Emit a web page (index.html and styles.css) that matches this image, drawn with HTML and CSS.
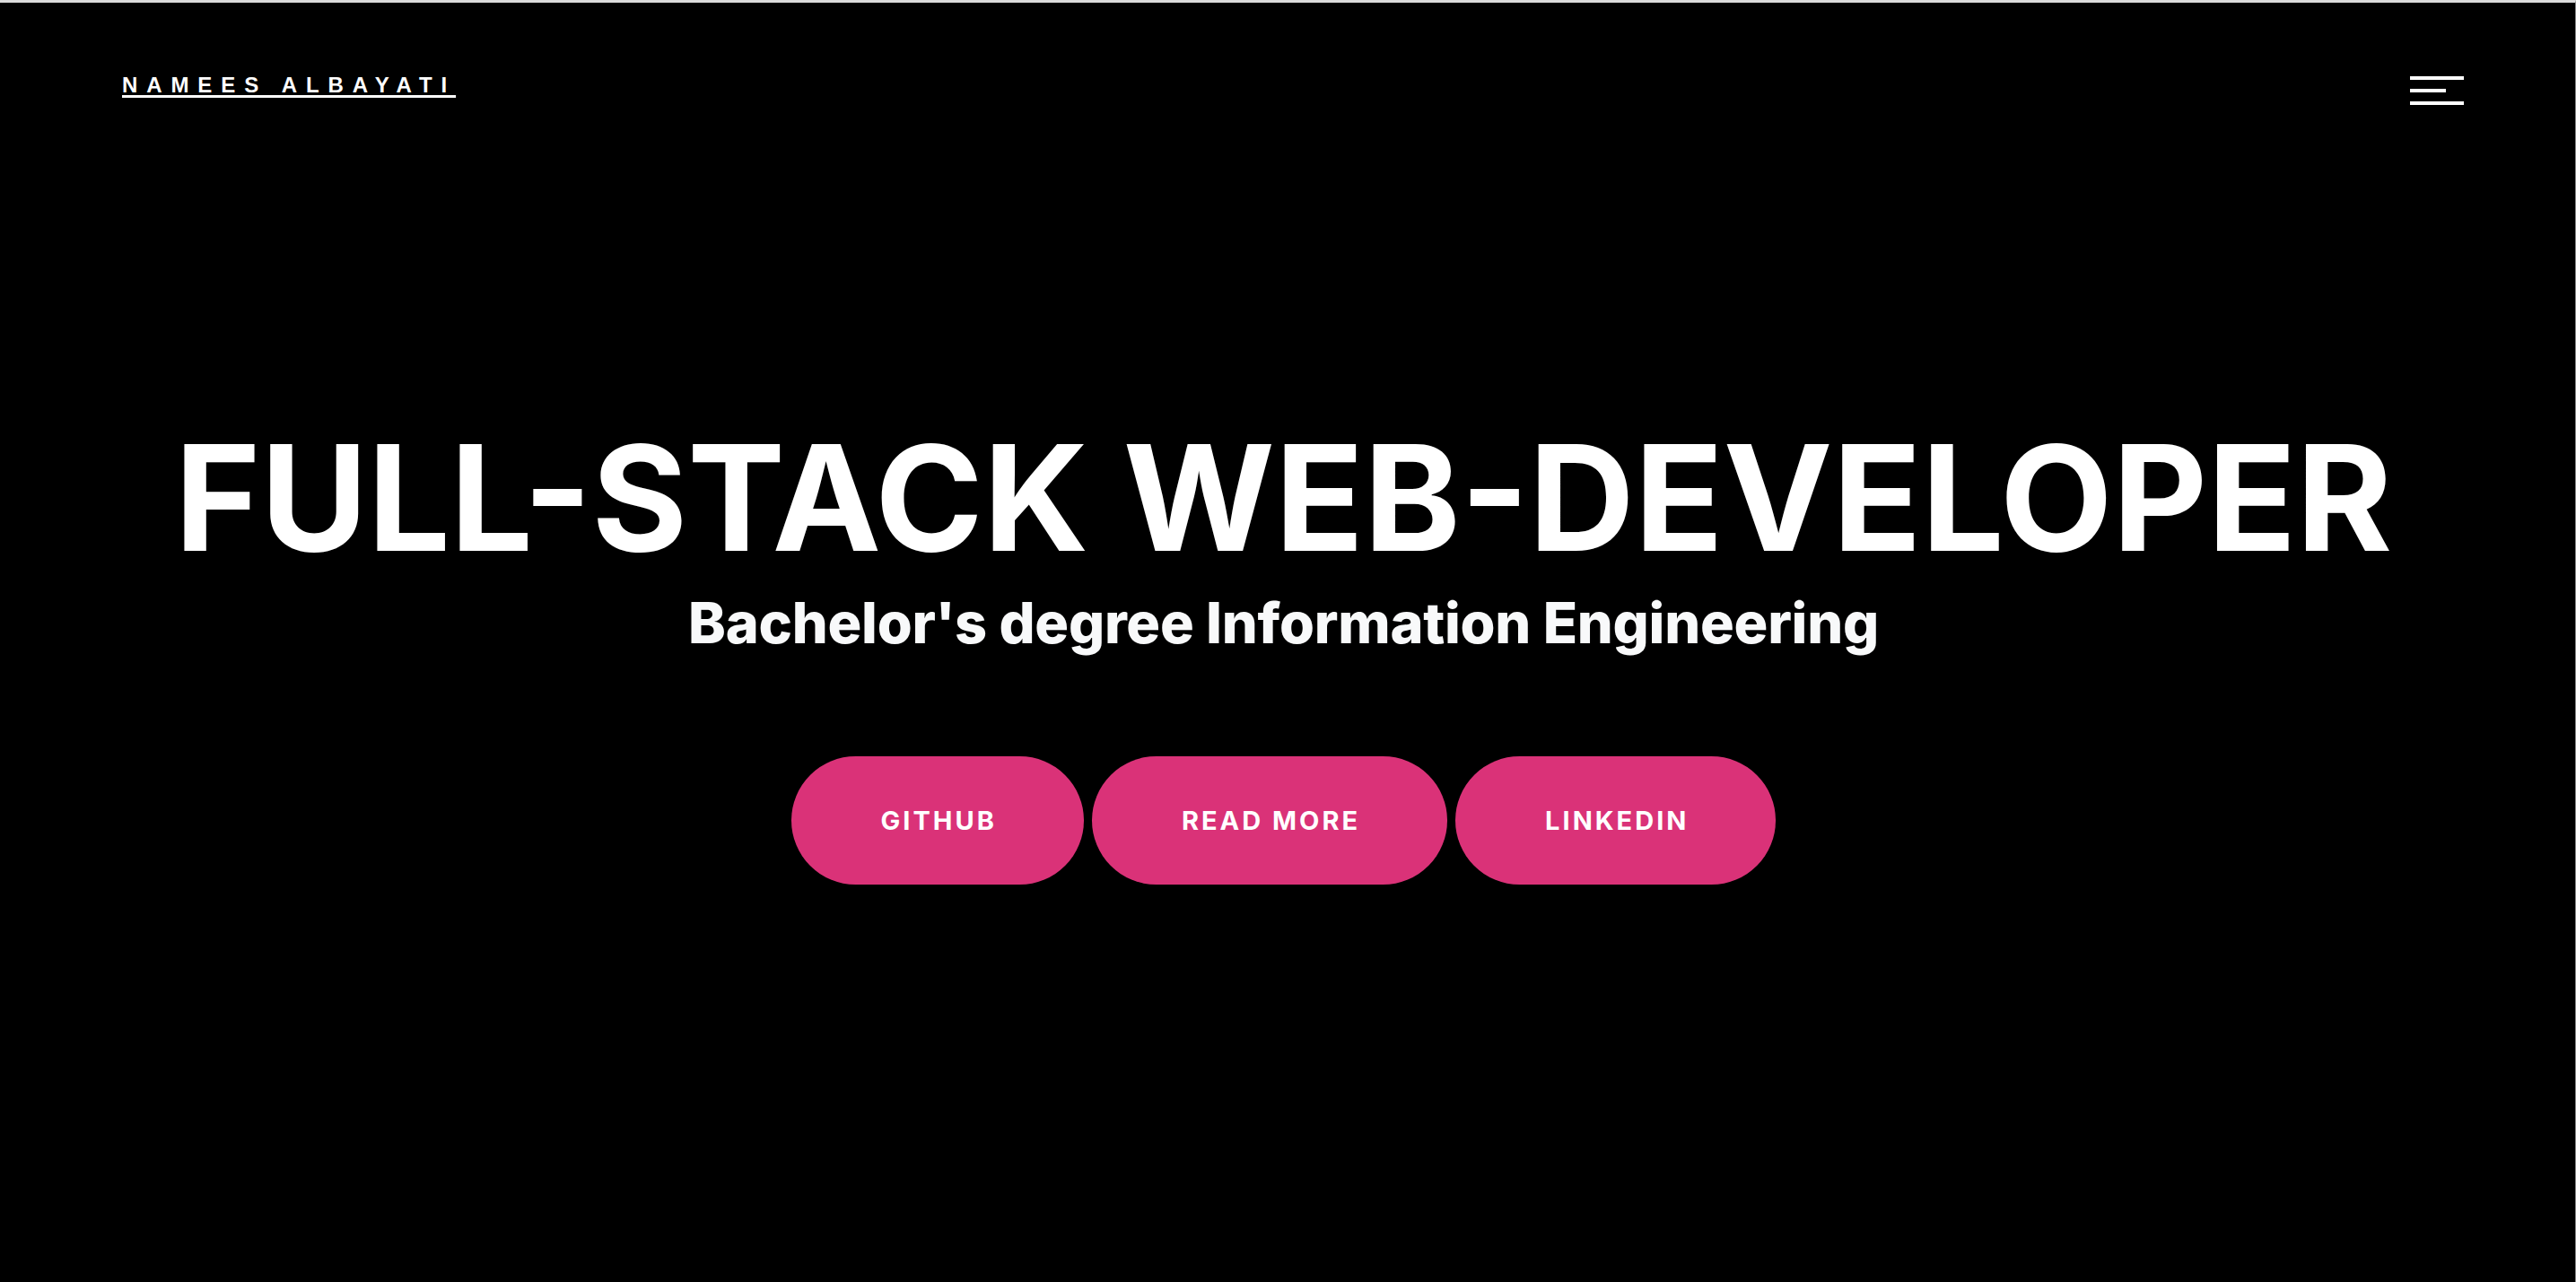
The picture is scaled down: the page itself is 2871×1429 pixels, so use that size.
FILE: index.html
```html
<!DOCTYPE html>
<html lang="en">
<head>
<meta charset="utf-8">
<title>Namees Albayati</title>
<link rel="stylesheet" href="styles.css">
</head>
<body>
<div class="page">
  <header class="topbar">
    <a class="brand" href="#">NAMEES ALBAYATI</a>
    <button class="menu" aria-label="Menu">
      <span class="bar bar-long"></span>
      <span class="bar bar-short"></span>
      <span class="bar bar-long"></span>
    </button>
  </header>
  <main class="hero">
    <h1 class="title">FULL-STACK WEB-DEVELOPER</h1>
    <p class="subtitle">Bachelor's degree Information Engineering</p>
    <div class="actions">
      <a class="btn btn-github" href="#">GITHUB</a>
      <a class="btn btn-more" href="#">READ MORE</a>
      <a class="btn btn-linkedin" href="#">LINKEDIN</a>
    </div>
  </main>
</div>
</body>
</html>
```
FILE: styles.css
```css
* { box-sizing: border-box; }
html, body { margin: 0; padding: 0; height: 100%; }
body {
  background: #000;
  font-family: "Inter", "Liberation Sans", Arial, sans-serif;
  color: #fff;
  overflow: hidden;
}
.page {
  height: 100vh;
  border-top: 3px solid #dcdcdc;
  border-right: 1px solid #8a8a8a;
  display: flex;
  flex-direction: column;
}
.topbar {
  display: flex;
  justify-content: space-between;
  align-items: flex-start;
  padding: 78px 124px 0 136px;
}
.brand {
  font-family: "Liberation Sans", Arial, sans-serif;
  font-weight: 700;
  font-size: 24px;
  line-height: 28px;
  letter-spacing: 9.9px;
  color: #fff;
  text-decoration: underline;
  text-decoration-thickness: 3px;
  text-underline-offset: 3px;
}
.menu {
  background: none;
  border: 0;
  padding: 4px 0 0 0;
  display: flex;
  flex-direction: column;
  align-items: flex-start;
  gap: 10px;
  cursor: pointer;
}
.bar { display: block; height: 4px; background: #fff; }
.bar-long { width: 60px; }
.bar-short { width: 40px; }
.hero {
  display: flex;
  flex-direction: column;
  align-items: center;
  padding-top: 356px;
  padding-right: 9px;
}
.title {
  margin: 0;
  font-size: 163px;
  line-height: 1;
  font-weight: 700;
  letter-spacing: 0;
  color: #fff;
}
.subtitle {
  margin: 27px 0 0 0;
  font-size: 63px;
  line-height: 1;
  font-weight: 800;
  letter-spacing: -0.25px;
  color: #f8f9fa;
}
.actions {
  display: flex;
  gap: 9px;
  margin-top: 117px;
}
.btn {
  display: flex;
  align-items: center;
  justify-content: center;
  height: 143px;
  padding: 0 97px 0 100px;
  border-radius: 72px;
  background: #da3278;
  color: #fff;
  text-decoration: none;
  font-size: 29px;
  font-weight: 700;
  letter-spacing: 3px;
}
```
